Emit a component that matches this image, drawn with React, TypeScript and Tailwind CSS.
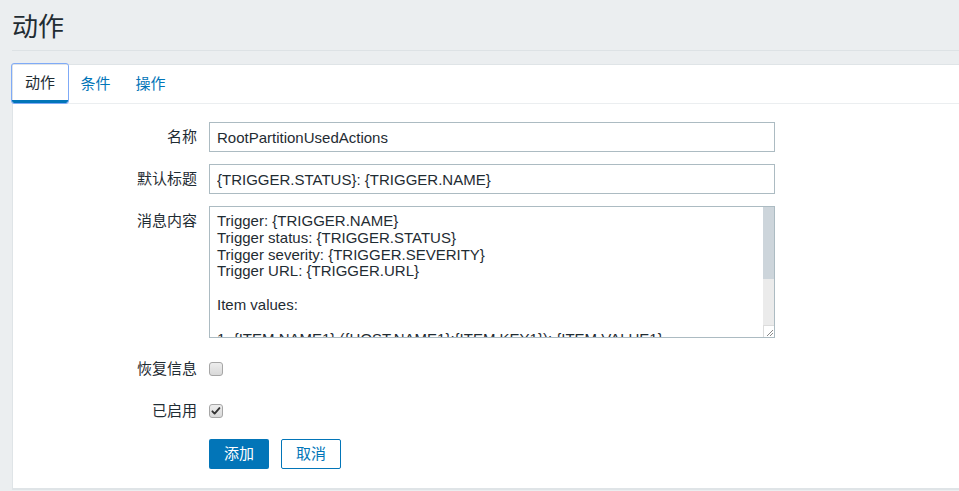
import { useState } from "react";

const MESSAGE = `Trigger: {TRIGGER.NAME}
Trigger status: {TRIGGER.STATUS}
Trigger severity: {TRIGGER.SEVERITY}
Trigger URL: {TRIGGER.URL}

Item values:

1. {ITEM.NAME1} ({HOST.NAME1}:{ITEM.KEY1}): {ITEM.VALUE1}
2. {ITEM.NAME2} ({HOST.NAME2}:{ITEM.KEY2}): {ITEM.VALUE2}
3. {ITEM.NAME3} ({HOST.NAME3}:{ITEM.KEY3}): {ITEM.VALUE3}

Original event ID: {EVENT.ID}`;

function Checkbox({ checked }: { checked: boolean }) {
  return (
    <span className="relative block w-[14px] h-[14px] rounded-[3px] border border-[#a6a6a6] bg-gradient-to-b from-[#ededed] to-[#d9d9d9]">
      {checked ? (
        <svg viewBox="0 0 14 14" className="absolute inset-0 w-full h-full">
          <path
            d="M2.8 7.4 L5.4 10 L11 3.6"
            fill="none"
            stroke="#333"
            strokeWidth="2.2"
            strokeLinecap="round"
            strokeLinejoin="round"
          />
        </svg>
      ) : null}
    </span>
  );
}

function Row({
  label,
  top,
  className,
  children,
}: {
  label?: string;
  top?: boolean;
  className?: string;
  children: React.ReactNode;
}) {
  return (
    <div className={`flex gap-[12px] ${top ? "items-start" : "items-center"} ${className ?? ""}`}>
      <label className={`w-[184px] shrink-0 text-right ${top ? "pt-[4px]" : ""}`}>
        {label}
      </label>
      {children}
    </div>
  );
}

export default function App() {
  const [tab] = useState(0);
  const tabs = ["动作", "条件", "操作"];
  return (
    <div
      className="min-h-screen bg-[#ebeef0] text-[15px] text-[#1f2c33]"
      style={{ fontFamily: '"Liberation Sans", "Noto Sans CJK SC", sans-serif' }}
    >
      <header className="ml-[12px] h-[51px] border-b border-[#dde2e5] flex items-center">
        <h1 className="text-[26px] leading-none pt-[3px] font-normal">动作</h1>
      </header>

      <section className="mt-[13px] ml-[12px] bg-white border-t border-l border-b-2 border-[#dfe4e7]">
        <nav className="flex h-[39px] border-b border-[#ebeef0]">
          {tabs.map((t, i) =>
            i === tab ? (
              <div
                key={t}
                className="relative -ml-px -mt-px h-[39px] w-[56px] flex items-center justify-center rounded-[2px] outline outline-1 outline-[#7faaf7] border-b-[3px] border-[#0275b8] text-[#1f2c33]"
              >
                <span className="pt-[3px]">{t}</span>
              </div>
            ) : (
              <div
                key={t}
                className="h-[38px] w-[55px] flex items-center justify-center text-[#0275b8]"
              >
                {t}
              </div>
            )
          )}
        </nav>

        <form className="pt-[18px] pb-[19px]">
          <Row label="名称">
            <input
              defaultValue="RootPartitionUsedActions"
              className="w-[566px] h-[30px] border border-[#acbbc2] px-[7px] outline-none"
            />
          </Row>
          <Row label="默认标题" className="mt-[12px]">
            <input
              defaultValue="{TRIGGER.STATUS}: {TRIGGER.NAME}"
              className="w-[566px] h-[30px] border border-[#acbbc2] px-[7px] outline-none"
            />
          </Row>
          <Row label="消息内容" top className="mt-[12px]">
            <div className="flex w-[566px] h-[132px] border border-[#acbbc2]">
              <textarea
                defaultValue={MESSAGE}
                className="flex-1 h-full px-[7px] py-[6px] leading-[16.8px] outline-none resize-none overflow-hidden"
              />
              <div className="w-[11px] flex flex-col bg-[#ebebeb]">
                <div className="h-[72px] bg-[#cdd5db]" />
                <div className="flex-1" />
                <div className="h-[12px] bg-white border-l border-t border-[#dcdcdc] flex items-end justify-end">
                  <svg viewBox="0 0 10 10" className="w-[10px] h-[10px]">
                    <path d="M3 9 L9 3 M6 9 L9 6" stroke="#8a8a8a" strokeWidth="1" />
                  </svg>
                </div>
              </div>
            </div>
          </Row>
          <Row label="恢复信息" className="mt-[24px] h-[14px]">
            <Checkbox checked={false} />
          </Row>
          <Row label="已启用" className="mt-[28px] h-[14px]">
            <Checkbox checked />
          </Row>
          <Row className="mt-[21px]">
            <div className="flex gap-[12px]">
              <button
                type="button"
                className="w-[60px] h-[30px] rounded-[2px] bg-[#0275b8] text-white"
              >
                添加
              </button>
              <button
                type="button"
                className="w-[60px] h-[30px] rounded-[2px] border border-[#0275b8] bg-white text-[#0275b8]"
              >
                取消
              </button>
            </div>
          </Row>
        </form>
      </section>
    </div>
  );
}
